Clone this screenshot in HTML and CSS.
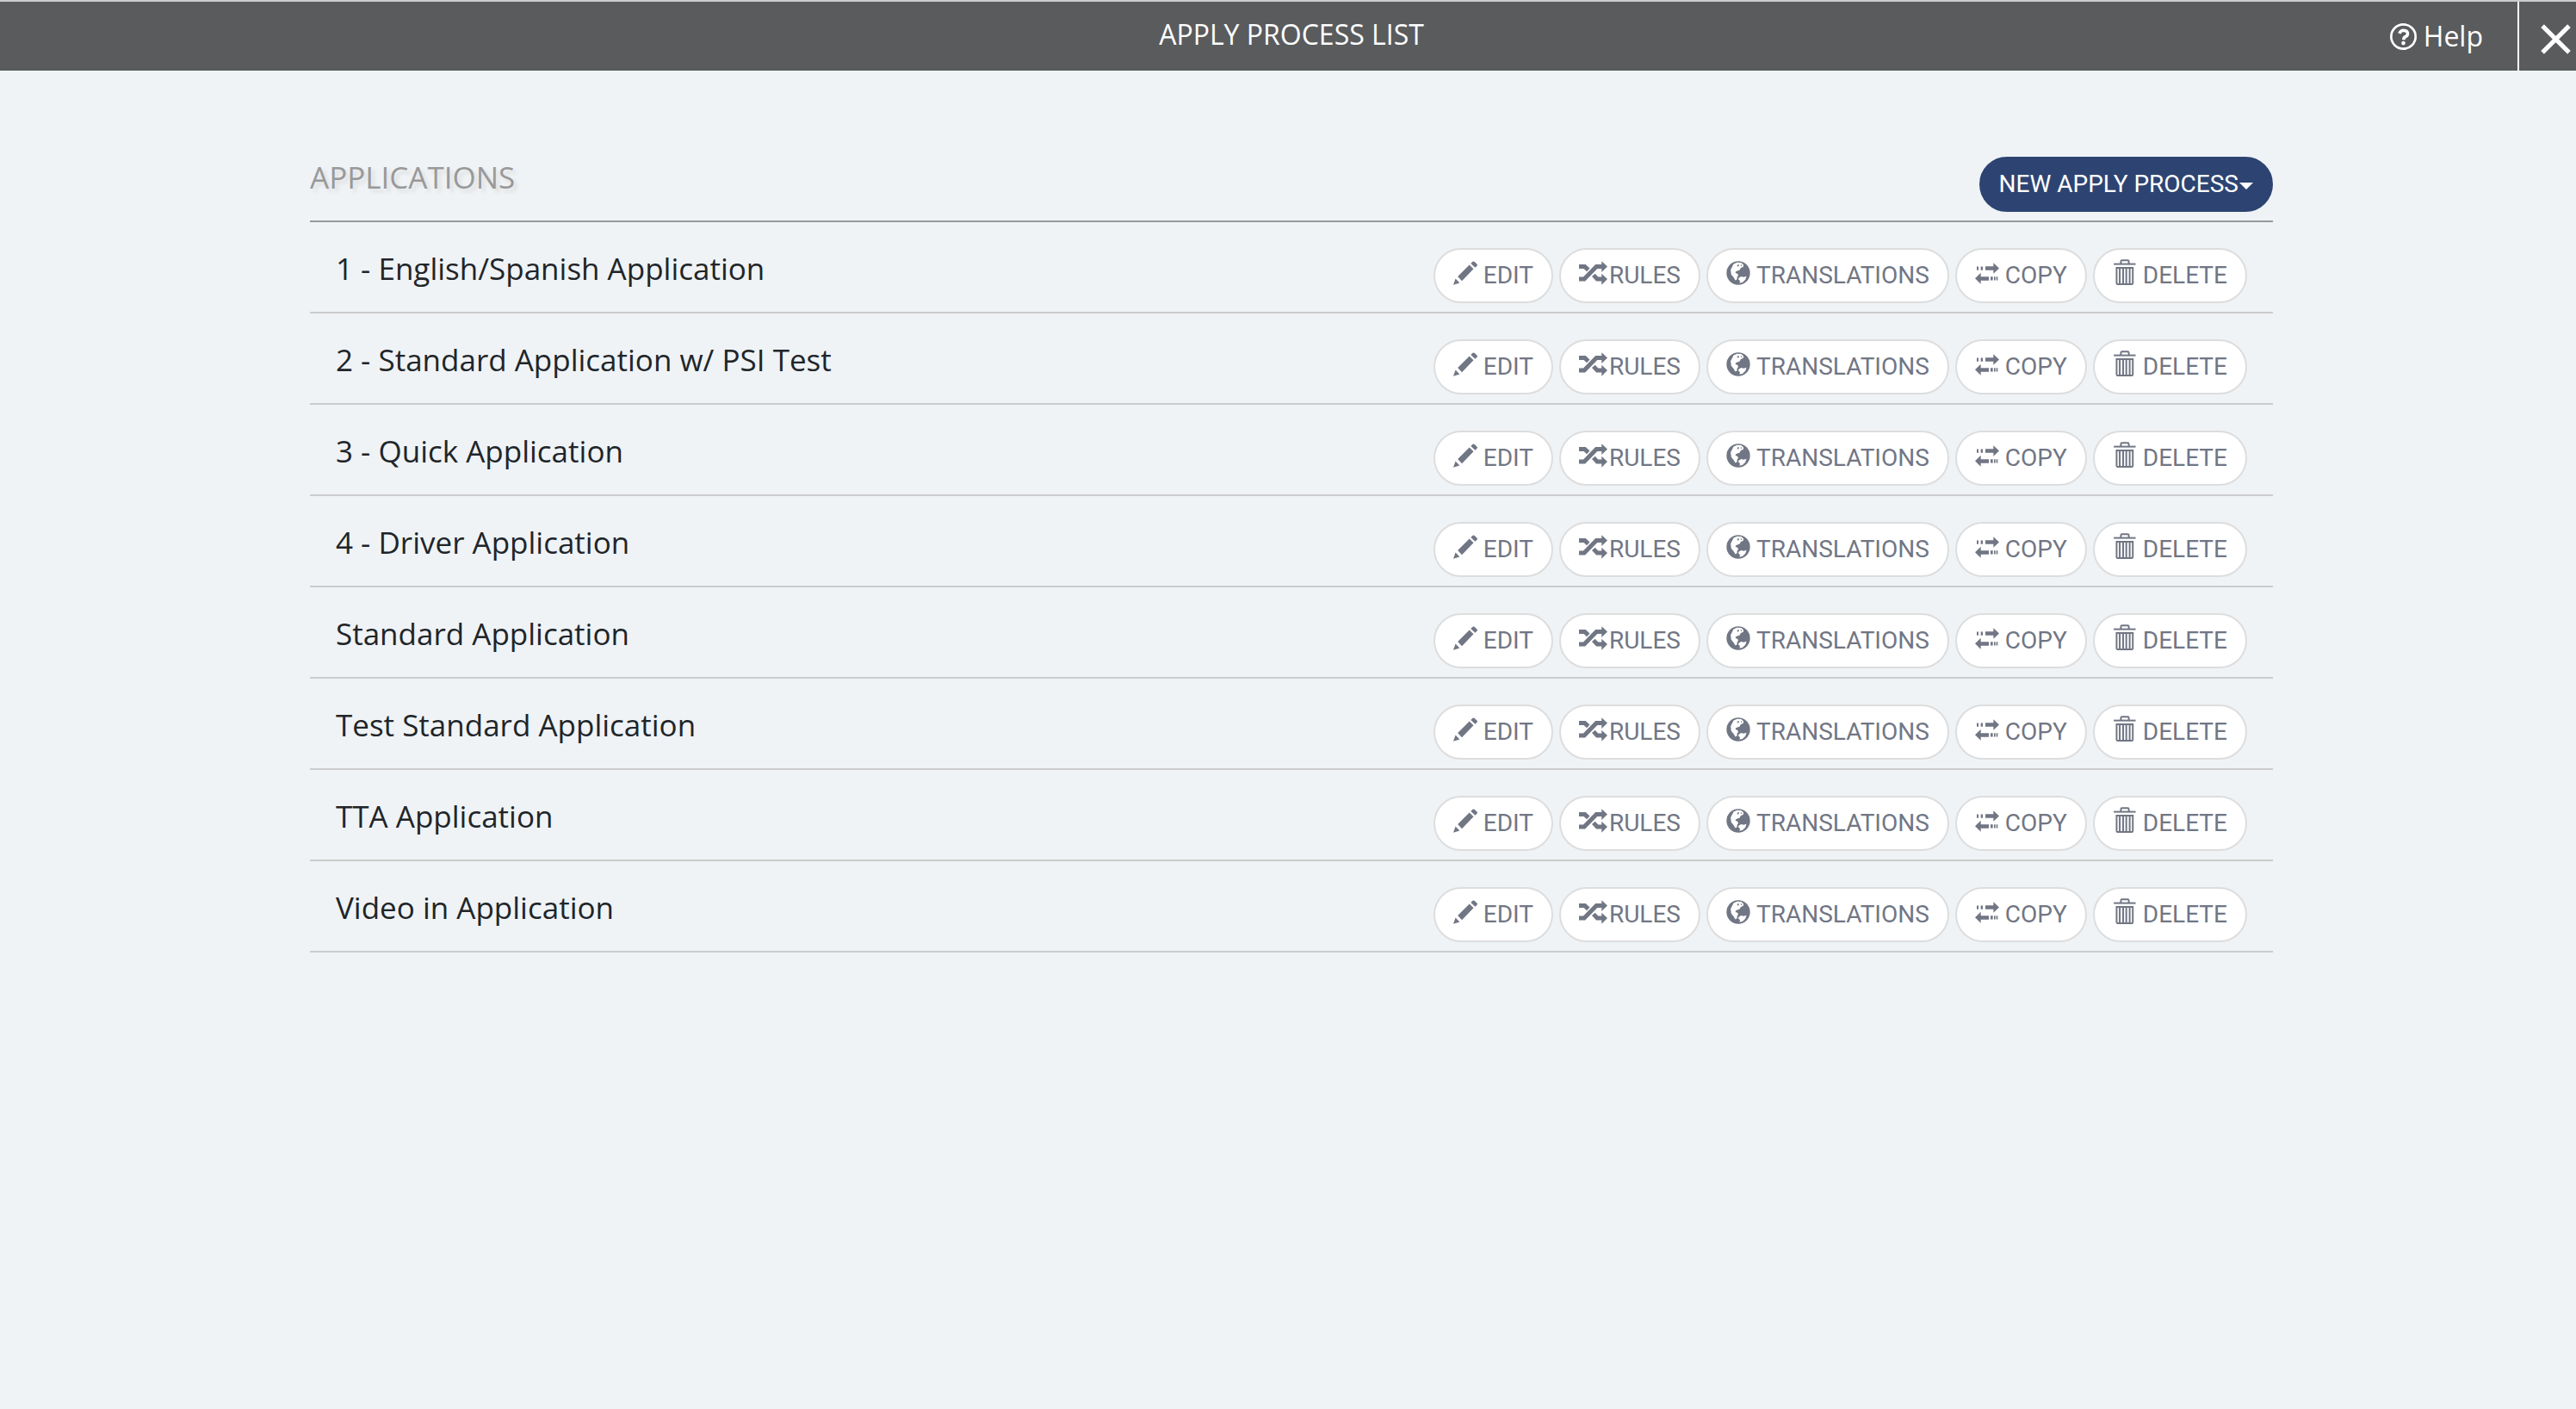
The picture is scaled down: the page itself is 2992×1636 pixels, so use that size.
FILE: index.html
```html
<!DOCTYPE html>
<html lang="en">
<head>
    <meta charset="UTF-8">
    <title>Apply Process List</title>
    <link rel="stylesheet" href="styles.css">
</head>
<body>
<!-- icons shared by all the rows -->
<svg class="sprite" aria-hidden="true">
    <symbol id="edit" viewBox="0 0 87 85">
        <path d="M0 85L8 63L23 78ZM16 55L58 13L73 28L31 71ZM63 8L70 1Q74 -1 77 2L85 10Q88 13 86 16L79 23Z"/>
    </symbol>
    <symbol id="rules" viewBox="0 0 98 82">
        <path d="M0 62H18L60 19H80M0 19H20L32 30M50 48L63 62H80" fill="none" stroke="currentColor" stroke-width="15"/>
        <path d="M78 0L98 19L78 38ZM78 43L98 62L78 82Z"/>
    </symbol>
    <symbol id="globe" viewBox="0 0 80 82">
        <circle cx="40" cy="41" r="40"/>
        <path d="M24 10L36 5L50 6L58 13L57 20L48 24L45 31L37 34L32 36L30 40L38 44L40 50L36 54L36 62L30 66L24 56L16 46L14 30ZM42 57L50 53L58 55L68 52L64 64L54 73L44 75L46 68L40 62Z" fill="#fff"/>
        <path d="M36 14L42 12L42 18L37 19ZM48 12L53 15L49 18Z"/>
    </symbol>
    <symbol id="copy" viewBox="0 0 84 74">
        <path d="M6 13H12V26H6ZM20 13H27V26H20ZM36 12H64V0L84 19L64 38V26H36ZM0 54L20 35V48H48V62H20V74ZM54 48H62V61H54ZM66 48H71V61H66ZM74 48H79V61H74Z"/>
    </symbol>
    <symbol id="trash" viewBox="0 0 78 91">
        <path d="M0 14H77V20H0Z"/>
        <path d="M25 16V8Q25 4 29 4H49Q53 4 53 8V16M10 30H67V84Q67 88 63 88H14Q10 88 10 84ZM21 30V88M33 30V88M44 30V88M56 30V88" fill="none" stroke="currentColor" stroke-width="6"/>
    </symbol>
</svg>

<header class="topbar">
    <h1>APPLY PROCESS LIST</h1>
    <a class="help" href="#">
        <svg class="icon-help" viewBox="0 0 94 94" aria-hidden="true">
            <circle cx="47" cy="47" r="43" fill="none" stroke="currentColor" stroke-width="8"/>
            <path d="M33 36Q37 25 48 25Q62 26 62 37Q62 43 55 47Q48 50 48 58" fill="none" stroke="currentColor" stroke-width="11"/>
            <circle cx="47" cy="70" r="7"/>
        </svg>
        Help
    </a>
    <button class="close" type="button" aria-label="Close">
        <svg class="icon-close" viewBox="0 0 34 34" aria-hidden="true"><path d="M2 2L32 32M32 2L2 32" stroke="currentColor" stroke-width="5"/></svg>
    </button>
</header>

<main class="container">
    <div class="heading">
        <h2>APPLICATIONS</h2>
        <button class="btn primary" type="button">NEW APPLY PROCESS<span class="caret"></span></button>
    </div>
    <ul class="list" id="list"></ul>
</main>

<script>
    var names = [
        '1 - English/Spanish Application',
        '2 - Standard Application w/ PSI Test',
        '3 - Quick Application',
        '4 - Driver Application',
        'Standard Application',
        'Test Standard Application',
        'TTA Application',
        'Video in Application'
    ];
    var actions = [['edit', 'EDIT'], ['rules', 'RULES'], ['globe', 'TRANSLATIONS'], ['copy', 'COPY'], ['trash', 'DELETE']];
    var list = document.getElementById('list');

    for (var i = 0; i < names.length; i++) {
        var html = '<span class="name">' + names[i] + '</span><div class="actions">';
        for (var j = 0; j < actions.length; j++) {
            html += '<button class="btn" type="button"><svg class="icon icon-' + actions[j][0] + '" aria-hidden="true"><use href="#' + actions[j][0] + '"/></svg>' + actions[j][1] + '</button>';
        }
        var row = document.createElement('li');
        row.className = 'row';
        row.innerHTML = html + '</div>';
        list.appendChild(row);
    }
</script>
</body>
</html>
```

FILE: styles.css
```css
* {
    box-sizing: border-box;
    margin: 0;
    padding: 0;
}

body {
    background: #eff3f6;
    color: #212529;
    font-family: "Open Sans", sans-serif;
}

svg {
    fill: currentColor;
    flex: none;
}

.sprite {
    display: none;
}

/* top bar */
.topbar {
    display: grid;
    grid-template-columns: 1fr auto 1fr auto;
    height: 82px;
    border-top: 2px solid #ccc;
    background: #5a5b5d;
    color: #fff;
    font-size: 32px;
    line-height: 76px;
}

.topbar h1 {
    grid-column: 2;
    padding-left: 76px;
    font-size: 32px;
    font-weight: 400;
}

.help {
    display: flex;
    justify-content: flex-end;
    align-items: center;
    gap: 8px;
    padding-right: 40px;
    color: #fff;
    line-height: 80px;
    text-decoration: none;
}

.icon-help {
    width: 31px;
    height: 31px;
}

.close {
    display: flex;
    align-items: center;
    width: 68px;
    padding: 6px 0 0 25px;
    border: 0;
    border-left: 2px solid #fff;
    background: none;
    color: #fff;
}

.icon-close {
    width: 35px;
    height: 35px;
}

/* list */
.container {
    width: 100%;
    max-width: 2288px;
    margin: 100px auto 0;
    padding-left: 8px;
}

.heading {
    display: flex;
    justify-content: space-between;
    height: 76px;
    border-bottom: 2px solid #999;
}

.heading h2 {
    color: #999;
    font-size: 35px;
    font-weight: 400;
    line-height: 48px;
    text-shadow: 4px 4px 4px #ddd;
}

.list {
    list-style: none;
}

.row {
    display: flex;
    justify-content: space-between;
    padding: 30px 30px 10px;
    border-bottom: 2px solid #ccc;
}

.name {
    font-size: 35px;
    line-height: 48px;
}

.actions {
    display: flex;
    gap: 7px;
}

.btn {
    display: flex;
    align-items: center;
    height: 64px;
    padding: 0 21px;
    border: 2px solid #ddd;
    border-radius: 32px;
    background: #fff;
    color: #717684;
    font-family: Roboto, sans-serif;
    font-size: 28px;
    line-height: 60px;
    white-space: nowrap;
}

.primary {
    border-color: #2d4472;
    background: #2d4472;
    color: #fff;
}

.caret {
    border: 8px solid transparent;
    border-top-color: #fff;
    border-bottom: 0;
    margin: 4px 0 0 1px;
}

.icon {
    width: 28px;
    height: 28px;
    margin: 0 7px 6px 0;
}

.icon-rules {
    width: 33px;
    margin-right: 2px;
}

.icon-copy {
    height: 25px;
}

.icon-trash {
    width: 26px;
    height: 30px;
    margin: 0 8px 8px 1px;
}
```
